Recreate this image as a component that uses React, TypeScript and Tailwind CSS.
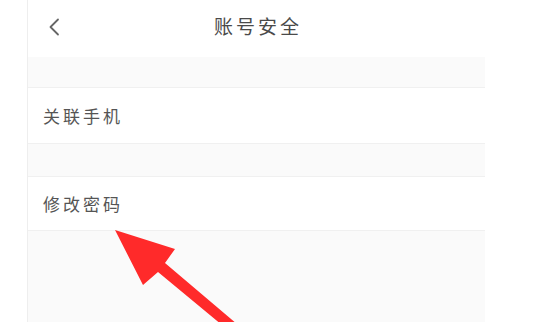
import React from "react";

function Row({ label, h }: { label: string; h: string }) {
    return (
        <div className={`${h} flex items-center pl-[15px] bg-white border-b border-[#f0f0f0]`}>
            <span className="text-[17px] tracking-[3px] text-[#555555]">{label}</span>
        </div>
    );
}

function Band({ h }: { h: string }) {
    return <div className={`${h} bg-[#fafafa] border-b border-[#f0f0f0]`} />;
}

export default function App() {
    return (
        <div
            className="relative w-[549px] h-[322px] bg-white overflow-hidden"
            style={{ fontFamily: '"Noto Sans CJK SC", "Noto Sans", sans-serif' }}
        >
            <div className="ml-[27px] w-[458px] h-full flex flex-col border-l border-[#eeeeee]">
                {/* Header */}
                <div className="h-[57px] relative flex items-center justify-center bg-white">
                    <button className="absolute left-[19px] top-[17px] w-[14px] h-[20px] flex items-center justify-center">
                        <svg width="12" height="18" viewBox="0 0 12 18" fill="none">
                            <path d="M10 1.5L2.5 9L10 16.5" stroke="#666" strokeWidth="1.8" strokeLinecap="round" strokeLinejoin="round" />
                        </svg>
                    </button>
                    <h1 className="text-[19px] tracking-[3px] text-[#4a4a4a] -mt-[4px] ml-[3px]">账号安全</h1>
                </div>

                <Band h="h-[31px]" />
                <Row label="关联手机" h="h-[56px]" />
                <Band h="h-[33px]" />
                <Row label="修改密码" h="h-[54px]" />
                <div className="flex-1 bg-[#fafafa]" />
            </div>

            {/* annotation arrow */}
            <svg className="absolute left-0 top-0 pointer-events-none" width="549" height="322" viewBox="0 0 549 322">
                <polygon
                    points="115,230 175,249 165,263 244,330 228,330 158,272 143,285"
                    fill="#ff2a2a"
                />
            </svg>
        </div>
    );
}
